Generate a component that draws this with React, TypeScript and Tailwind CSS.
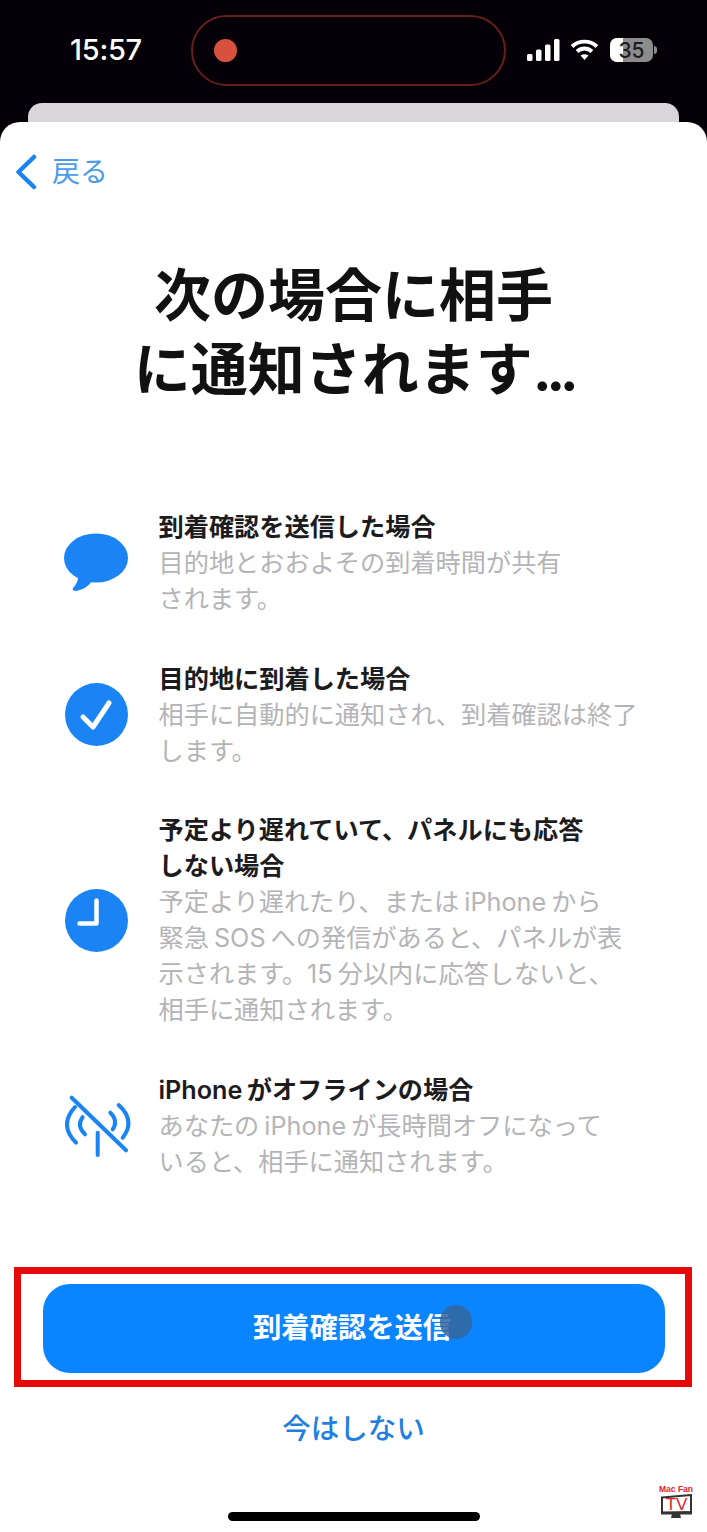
import React from 'react';

const items = [
  {
    icon: 'bubble',
    title: ['到着確認を送信した場合'],
    body: ['目的地とおおよその到着時間が共有', 'されます。'],
  },
  {
    icon: 'check',
    title: ['目的地に到着した場合'],
    body: ['相手に自動的に通知され、到着確認は終了', 'します。'],
  },
  {
    icon: 'clock',
    title: ['予定より遅れていて、パネルにも応答', 'しない場合'],
    body: ['予定より遅れたり、または iPhone から', '緊急 SOS への発信があると、パネルが表', '示されます。15 分以内に応答しないと、', '相手に通知されます。'],
  },
  {
    icon: 'offline',
    title: ['iPhone がオフラインの場合'],
    body: ['あなたの iPhone が長時間オフになって', 'いると、相手に通知されます。'],
  },
];

const RowIcon = ({ name }: { name: string }) => {
  if (name === 'bubble') {
    return (
      <svg width="64" height="60" viewBox="0 0 64 60" className="-ml-px text-[#1b84f5]">
        <ellipse cx="32" cy="25" rx="32" ry="24.5" fill="currentColor" />
        <path d="M14 40C15 47 12 52 9 55C8 57 10 58 12 58C18 57 24 54 28 48Z" fill="currentColor" />
      </svg>
    );
  }
  if (name === 'check') {
    return (
      <svg width="63" height="63" viewBox="0 0 63 63">
        <circle cx="31.5" cy="31.5" r="31.5" fill="#1b84f5" />
        <path d="M18 34L28 44L44 20" fill="none" stroke="#fff" strokeWidth="5" strokeLinecap="round" strokeLinejoin="round" />
      </svg>
    );
  }
  if (name === 'clock') {
    return (
      <svg width="63" height="63" viewBox="0 0 63 63">
        <circle cx="31.5" cy="31.5" r="31.5" fill="#1b84f5" />
        <path d="M31.5 11.5V34.5H14.5" fill="none" stroke="#fff" strokeWidth="4.5" strokeLinecap="round" strokeLinejoin="round" />
      </svg>
    );
  }
  return (
    <svg width="66" height="62" viewBox="0 0 66 62" fill="none" stroke="#1b84f5" strokeWidth="4" strokeLinecap="round">
      <path d="M6.7 2.7L61 55.3" />
      <path d="M32.7 37.7V60" />
      <path d="M10 12Q-6.5 30 11 47.7" />
      <path d="M17.7 22Q11.2 31 20 39.3" />
      <path d="M53.7 10Q70.9 25.6 57.7 42.7" />
      <path d="M45.3 17.7Q53.5 26 47.7 34.3" />
    </svg>
  );
};

const StatusIcons = () => (
  <div className="flex items-center">
    <svg width="33" height="22" viewBox="0 0 33 22" fill="#fff">
      <rect x="0" y="15" width="5.5" height="7" rx="1.5" />
      <rect x="9" y="10.5" width="5.5" height="11.5" rx="1.5" />
      <rect x="18" y="5.5" width="5.5" height="16.5" rx="1.5" />
      <rect x="27" y="0" width="5.5" height="22" rx="1.5" />
    </svg>
    <svg width="29" height="22" viewBox="0 0 29 22" fill="none" stroke="#fff" strokeWidth="3.8" className="ml-[10px]">
      <path d="M2 7.5C9 1 20 1 27 7.5" />
      <path d="M7 12.5C11.500 8.500 17.500 8.500 22 12.500" />
      <path d="M14.500 21L10.500 16.500C13 14.800 16 14.800 18.500 16.500Z" fill="#fff" stroke="none" />
    </svg>
    <div className="relative ml-[11px] h-[24px] w-[43px] overflow-hidden rounded-[7px] bg-[#8c8c8c]">
      <div className="h-full w-[13px] bg-white" />
      <span className="absolute inset-0 flex items-center justify-center text-[21px] leading-none font-medium text-[#1c1c1e]">35</span>
    </div>
    <div className="ml-[1px] h-[8px] w-[3px] rounded-r-full bg-[#8c8c8c]" />
  </div>
);

const Watermark = () => (
  <div className="absolute top-[1484px] left-[660px] flex w-[32px] flex-col items-center">
    <span className="font-['Liberation_Sans',sans-serif] text-[8.5px] leading-[10px] font-bold whitespace-nowrap text-[#e8202a]">Mac Fan</span>
    <svg width="32" height="24" viewBox="0 0 32 24">
      <path d="M2 3.500L31 1V18L2 19Z" fill="#fff" stroke="#333" strokeWidth="2" />
      <path d="M1 17.500H32V20.500H1Z" fill="#333" />
      <path d="M12 20H20L21 24H11Z" fill="#333" />
      <text x="16.500" y="16" textAnchor="middle" fontSize="17" fontFamily="Liberation Sans, sans-serif" fill="#e8202a">TV</text>
    </svg>
  </div>
);

const App = () => {
  return (
    <div className="relative flex h-[1532px] w-[707px] flex-col overflow-hidden bg-[#050008] font-[Inter,'Noto_Sans_CJK_JP',sans-serif]">
      {/* Status bar */}
      <div className="flex h-[103px] items-start pt-[15px]">
        <div className="flex h-[70px] w-[191px] items-center justify-center pl-[21px] text-[29px] font-medium tracking-[-0.3px] text-white">15:57</div>
        <div className="flex h-[71px] w-[315px] items-center rounded-full border-2 border-[#661f1a] pl-[21px]">
          <div className="size-[23px] rounded-full bg-[#d8503e]" />
        </div>
        <div className="flex h-[70px] items-center pl-[21px]">
          <StatusIcons />
        </div>
      </div>
      <div className="mx-[28px] h-[19px] rounded-t-[14px] bg-[#d8d6da]" />

      {/* Sheet */}
      <div className="flex flex-1 flex-col rounded-t-[20px] bg-white pt-[32px]">
        <div className="flex h-[36px] items-center pl-[15px]">
          <svg width="22" height="36" viewBox="0 0 22 36" fill="none" stroke="#1b84f5" strokeWidth="4.5" strokeLinecap="round" strokeLinejoin="round">
            <path d="M19 3L3.500 18L19 33" />
          </svg>
          <span className="ml-[15px] text-[28px] leading-[36px] text-[#4a9be8]">戻る</span>
        </div>

        <h1 className="mt-[69px] text-center text-[57px] leading-[74px] font-bold text-[#111]">
          次の場合に相手
          <br />
          に通知されます<span className="tracking-[-5.5px]">...</span>
        </h1>

        <div className="mt-[102px] flex flex-col gap-[43.6px] pl-[65px]">
          {items.map((item) => (
            <div key={item.icon} className="flex items-center">
              <div className="flex w-[93.500px] shrink-0 justify-start">
                <RowIcon name={item.icon} />
              </div>
              <div className="text-[25.2px] leading-[36px] whitespace-nowrap [word-spacing:-2px]">
                {item.title.map((line) => (
                  <div key={line} className="font-semibold text-[#1c1c1e]">{line}</div>
                ))}
                {item.body.map((line) => (
                  <div key={line} className="text-[#b4b4b8]">{line}</div>
                ))}
              </div>
            </div>
          ))}
        </div>

        <div className="mt-[87.2px] mr-[15px] ml-[14px] h-[120px] border-[7px] border-[#e60a0a] pt-[10px] pr-[20px] pl-[22px]">
          <div className="relative flex h-[89px] items-center justify-center rounded-[27px] bg-[#0a84ff] pr-[4px] text-[28.300px] font-semibold text-white">
            到着確認を送信
            <div className="absolute top-[21px] left-[397px] h-[34px] w-[32px] rounded-full bg-[#35669c]/85" />
          </div>
        </div>

        <div className="mt-[22px] h-[40px] text-center text-[28.500px] leading-[40px] font-medium text-[#1f7fe0]">今はしない</div>

        <div className="mx-auto mt-[63px] h-[9px] w-[252px] rounded-full bg-black" />
      </div>

      <Watermark />
    </div>
  );
};

export default App;
